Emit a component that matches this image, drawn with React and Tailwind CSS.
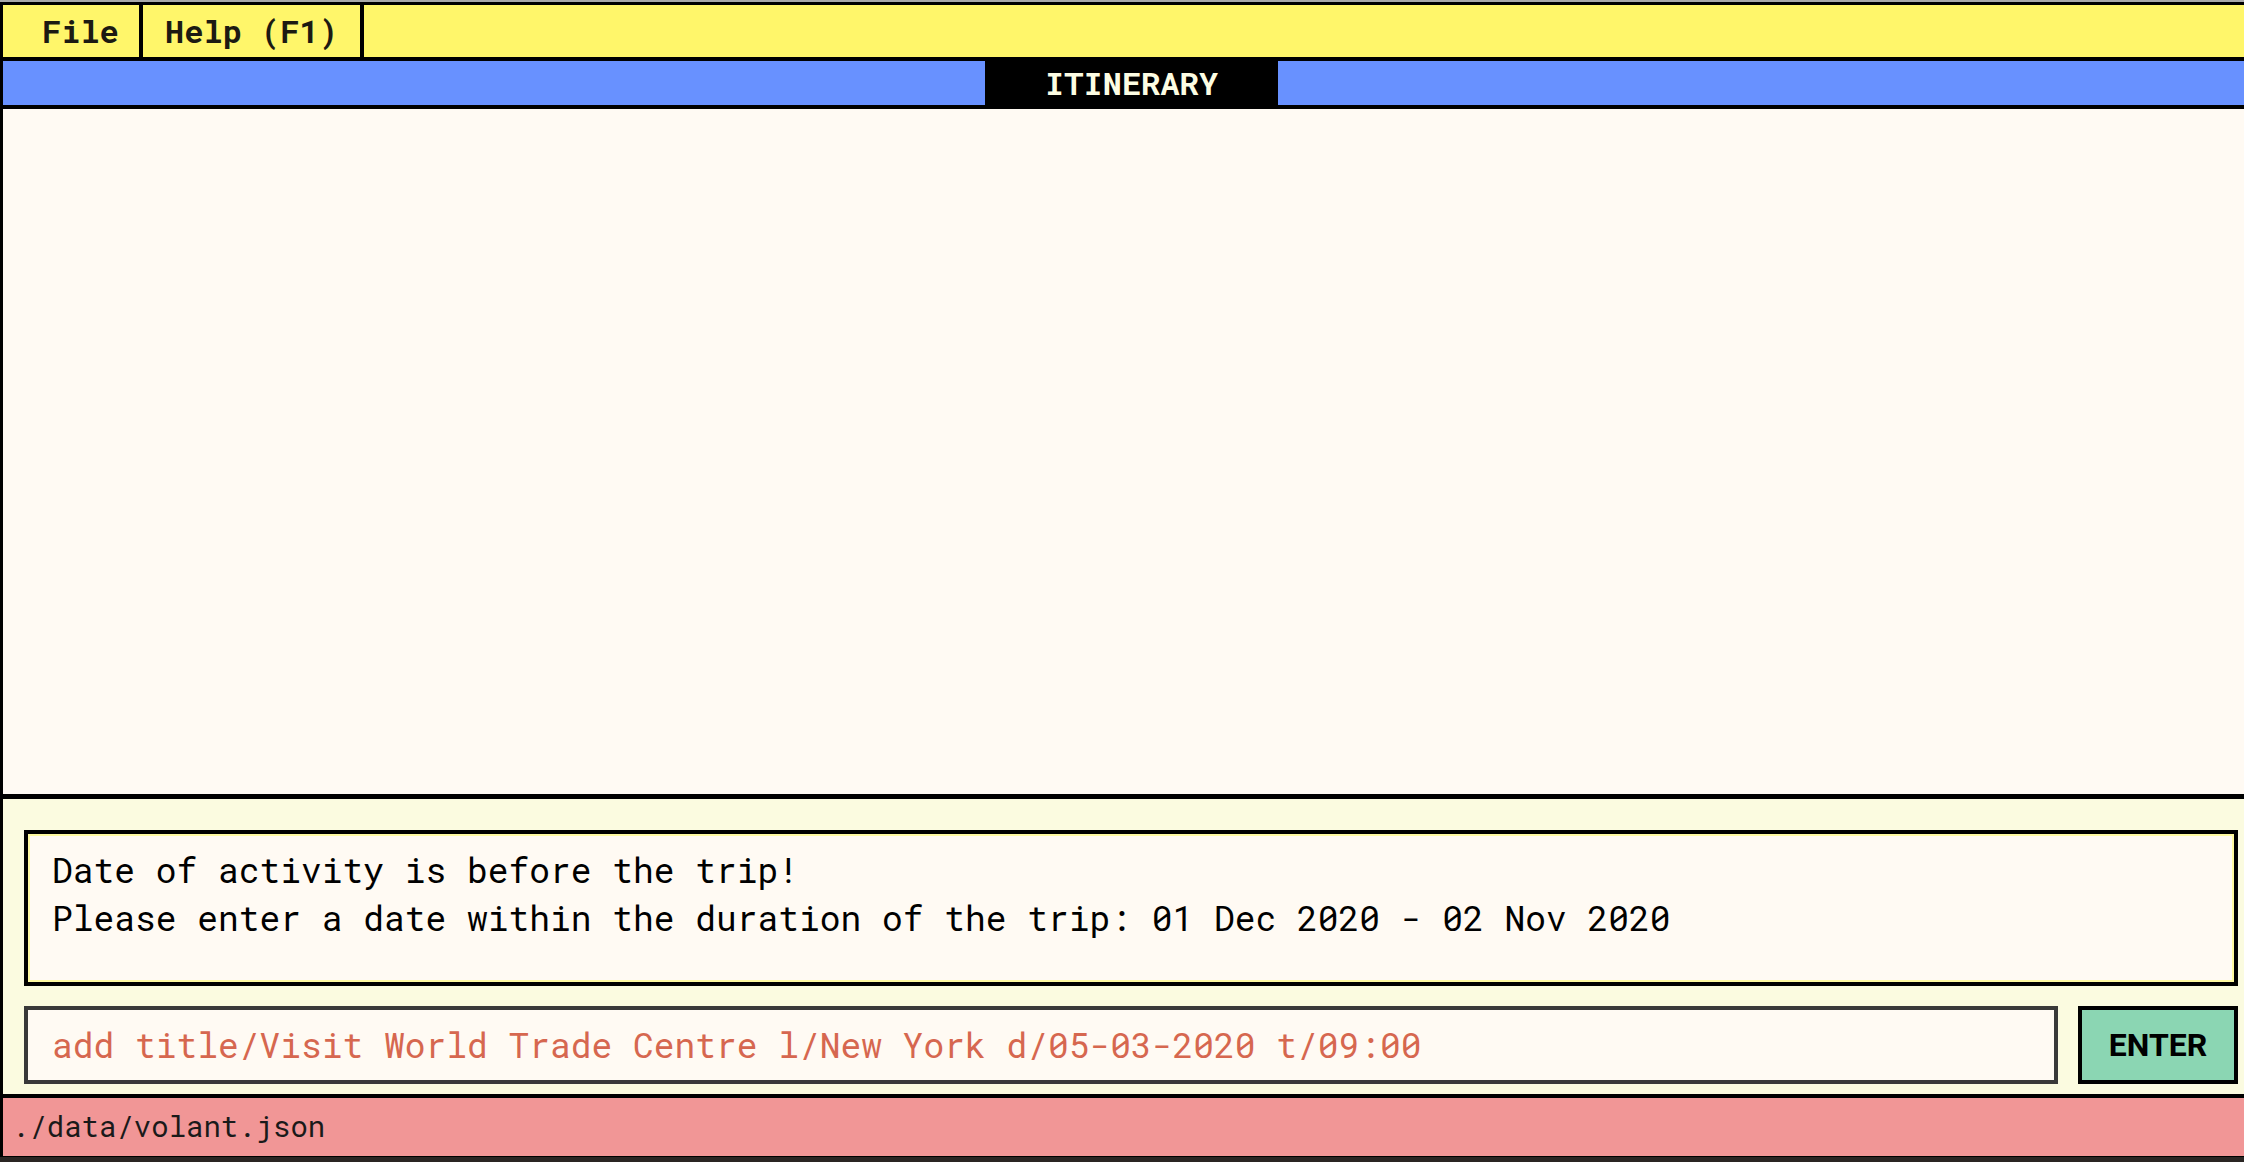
import React, { useState } from 'react';

const mono = "font-['Roboto_Mono','DejaVu_Sans_Mono',monospace]";

const App = () => {
  const [command, setCommand] = useState(
    'add title/Visit World Trade Centre l/New York d/05-03-2020 t/09:00'
  );

  return (
    <div className="w-[2244px] h-[1162px] overflow-hidden flex flex-col bg-[#2a2523]">
      {/* top edge of the screen */}
      <div className="h-[2px] bg-[#a9a9a9]" />

      <div className="flex flex-col border-l-[3px] border-t-[3px] border-black">
        {/* Menu bar */}
        <div className={`h-[52px] flex bg-[#fff66a] text-[#1c1a12] font-bold text-[32px] ${mono}`}>
          <div className="w-[140px] pl-[39px] flex items-center border-r-4 border-black">File</div>
          <div className="w-[221px] flex items-center justify-center border-r-4 border-black">Help (F1)</div>
        </div>

        {/* Title bar */}
        <div className="h-[52px] flex bg-[#6891ff] border-y-4 border-black">
          <div className="w-[982px]" />
          <div className={`w-[293px] -my-1 bg-black flex items-center justify-center text-[#fdfde3] font-bold text-[32px] ${mono}`}>
            ITINERARY
          </div>
        </div>

        {/* Itinerary list (empty) */}
        <div className="h-[685px] bg-[#fffaf3]" />

        {/* Result + command area */}
        <div className="h-[300px] flex flex-col bg-[#fbfbe0] border-t-[5px] border-black pl-[21px] pr-[6px] pt-[31px]">
          <div className="h-[156px] bg-[#fffaf3] border-4 border-black">
            <div className={`h-full border-2 border-[#fffaa0] pl-[22px] pt-[10px] text-[34.6px] leading-[48px] text-black ${mono}`}>
              <div>Date of activity is before the trip!</div>
              <div>Please enter a date within the duration of the trip: 01 Dec 2020 - 02 Nov 2020</div>
            </div>
          </div>

          <div className="mt-[20px] h-[78px] flex gap-[20px]">
            <div className="flex-1 border-4 border-[#393939] bg-[#fffaf3] flex items-center">
              <input
                value={command}
                onChange={(e) => setCommand(e.target.value)}
                className={`w-full bg-transparent outline-none pl-[24px] text-[34.6px] text-[#d6674f] ${mono}`}
              />
            </div>
            <button className="w-[160px] border-4 border-black bg-[#8bd6b3] text-black font-bold text-[32px] font-['Roboto','Liberation_Sans',sans-serif]">
              ENTER
            </button>
          </div>
        </div>

        {/* Status bar */}
        <div className={`h-[62px] bg-[#f19696] border-t-4 border-black flex items-center pl-[9px] text-[29px] text-[#1a1a1a] ${mono}`}>
          ./data/volant.json
        </div>
      </div>

      <div className="h-px bg-black" />
    </div>
  );
};

export default App;
